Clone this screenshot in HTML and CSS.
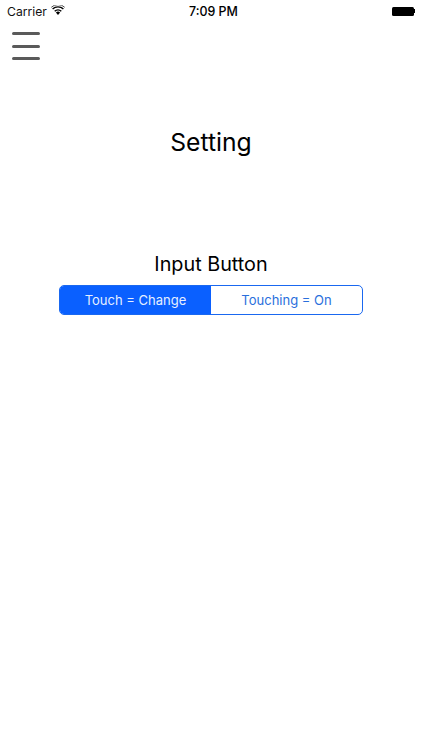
FILE: index.html
```html
<!DOCTYPE html>
<html lang="en">
<head>
<meta charset="utf-8">
<title>Setting</title>
<link rel="stylesheet" href="styles.css">
</head>
<body>
<div class="status">
  <div class="status-left">
    <span class="carrier">Carrier</span>
    <svg class="wifi" width="14" height="10" viewBox="0 0 14 10"><path d="M7 10 4.9 7.6a3 3 0 0 1 4.2 0Z" fill="#000"/><path d="M3.7 6.3a4.7 4.7 0 0 1 6.6 0" fill="none" stroke="#000" stroke-width="1.4"/><path d="M1.6 4.1a7.7 7.7 0 0 1 10.8 0" fill="none" stroke="#000" stroke-width="1.4"/><path d="M.3 2.3a9.6 9.6 0 0 1 13.4 0" fill="none" stroke="#000" stroke-width="1" opacity=".7"/></svg>
  </div>
  <span class="time">7:09 PM</span>
  <div class="battery"><span class="battery-body"></span><span class="battery-tip"></span></div>
</div>
<button class="menu" aria-label="Menu"><span></span><span></span><span></span></button>
<h1 class="title">Setting</h1>
<section class="input">
  <h2 class="input-label">Input Button</h2>
  <div class="segments">
    <div class="segment active">Touch = Change</div>
    <div class="segment">Touching = On</div>
  </div>
</section>
</body>
</html>
```
FILE: styles.css
```css
* { box-sizing: border-box; }
html, body { margin: 0; padding: 0; }
body {
  width: 422px;
  height: 750px;
  background: #fff;
  color: #000;
  font-family: Inter, "Liberation Sans", sans-serif;
  overflow: hidden;
}
.status {
  height: 22px;
  padding: 0 7px;
  display: grid;
  grid-template-columns: 1fr auto 1fr;
  align-items: center;
}
.status-left { display: flex; align-items: center; gap: 4px; }
.carrier { font-size: 12.2px; color: #111; }
.wifi { margin-top: -3px; }
.time { font-size: 12.4px; font-weight: 500; padding-left: 5px; }
.battery { justify-self: end; display: flex; align-items: center; }
.battery-body { width: 22px; height: 9px; background: #000; border-radius: 1.5px; }
.battery-tip { width: 1.5px; height: 4px; background: #000; }
.menu {
  display: flex;
  flex-direction: column;
  gap: 9.5px;
  margin: 10px 0 0 12px;
  padding: 0;
  width: 28px;
  border: 0;
  background: none;
}
.menu span { display: block; width: 28px; height: 3px; background: #5a5a5a; border-radius: 1.5px; }
.title {
  margin: 67px 0 0;
  text-align: center;
  font-size: 24.7px;
  font-weight: 400;
  line-height: 30px;
}
.input { margin: 94px 0 0; display: flex; flex-direction: column; align-items: center; }
.input-label {
  margin: 0 0 8px;
  font-size: 19.8px;
  font-weight: 400;
  line-height: 26px;
}
.segments {
  display: flex;
  width: 304px;
  height: 30px;
  border: 1.5px solid #1a68f0;
  border-radius: 5px;
  overflow: hidden;
}
.segment {
  flex: 1;
  display: flex;
  align-items: center;
  justify-content: center;
  font-size: 13px;
  color: #2a6fdc;
}
.segment.active { background: #0a60ff; color: #e6efff; }
```
